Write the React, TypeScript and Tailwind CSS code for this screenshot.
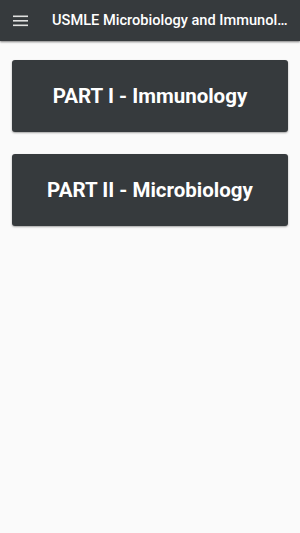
import React from 'react';

const parts = ['PART I - Immunology', 'PART II - Microbiology'];

const App = () => {
  return (
    <div className="min-h-[533px] w-[300px] bg-[#fafafa]" style={{ fontFamily: 'Roboto, "Liberation Sans", sans-serif' }}>
      {/* 상단 바 */}
      <header className="flex h-[41px] items-center bg-[#363a3d] pl-[13px] pr-[12px] shadow-[0_1px_2px_rgba(0,0,0,0.5)]">
        <svg width="16" height="12" viewBox="0 0 16 12" className="shrink-0">
          <rect x="0" y="0.5" width="15" height="1.6" fill="#e0e0e0" />
          <rect x="0" y="5" width="15" height="1.6" fill="#e0e0e0" />
          <rect x="0" y="9.5" width="15" height="1.6" fill="#e0e0e0" />
        </svg>
        <h1 className="ml-[23px] min-w-0 truncate text-[14.6px] font-medium text-white">
          USMLE Microbiology and Immunology
        </h1>
      </header>

      <main className="flex flex-col gap-[22px] px-3 pt-[19px]">
        {parts.map((p) => (
          <button
            key={p}
            className="flex h-[72px] items-center justify-center rounded-[3px] bg-[#363a3d] text-[20.5px] font-bold text-white shadow-[0_1px_2px_rgba(0,0,0,0.35)]"
          >
            {p}
          </button>
        ))}
      </main>
    </div>
  );
};

export default App;
